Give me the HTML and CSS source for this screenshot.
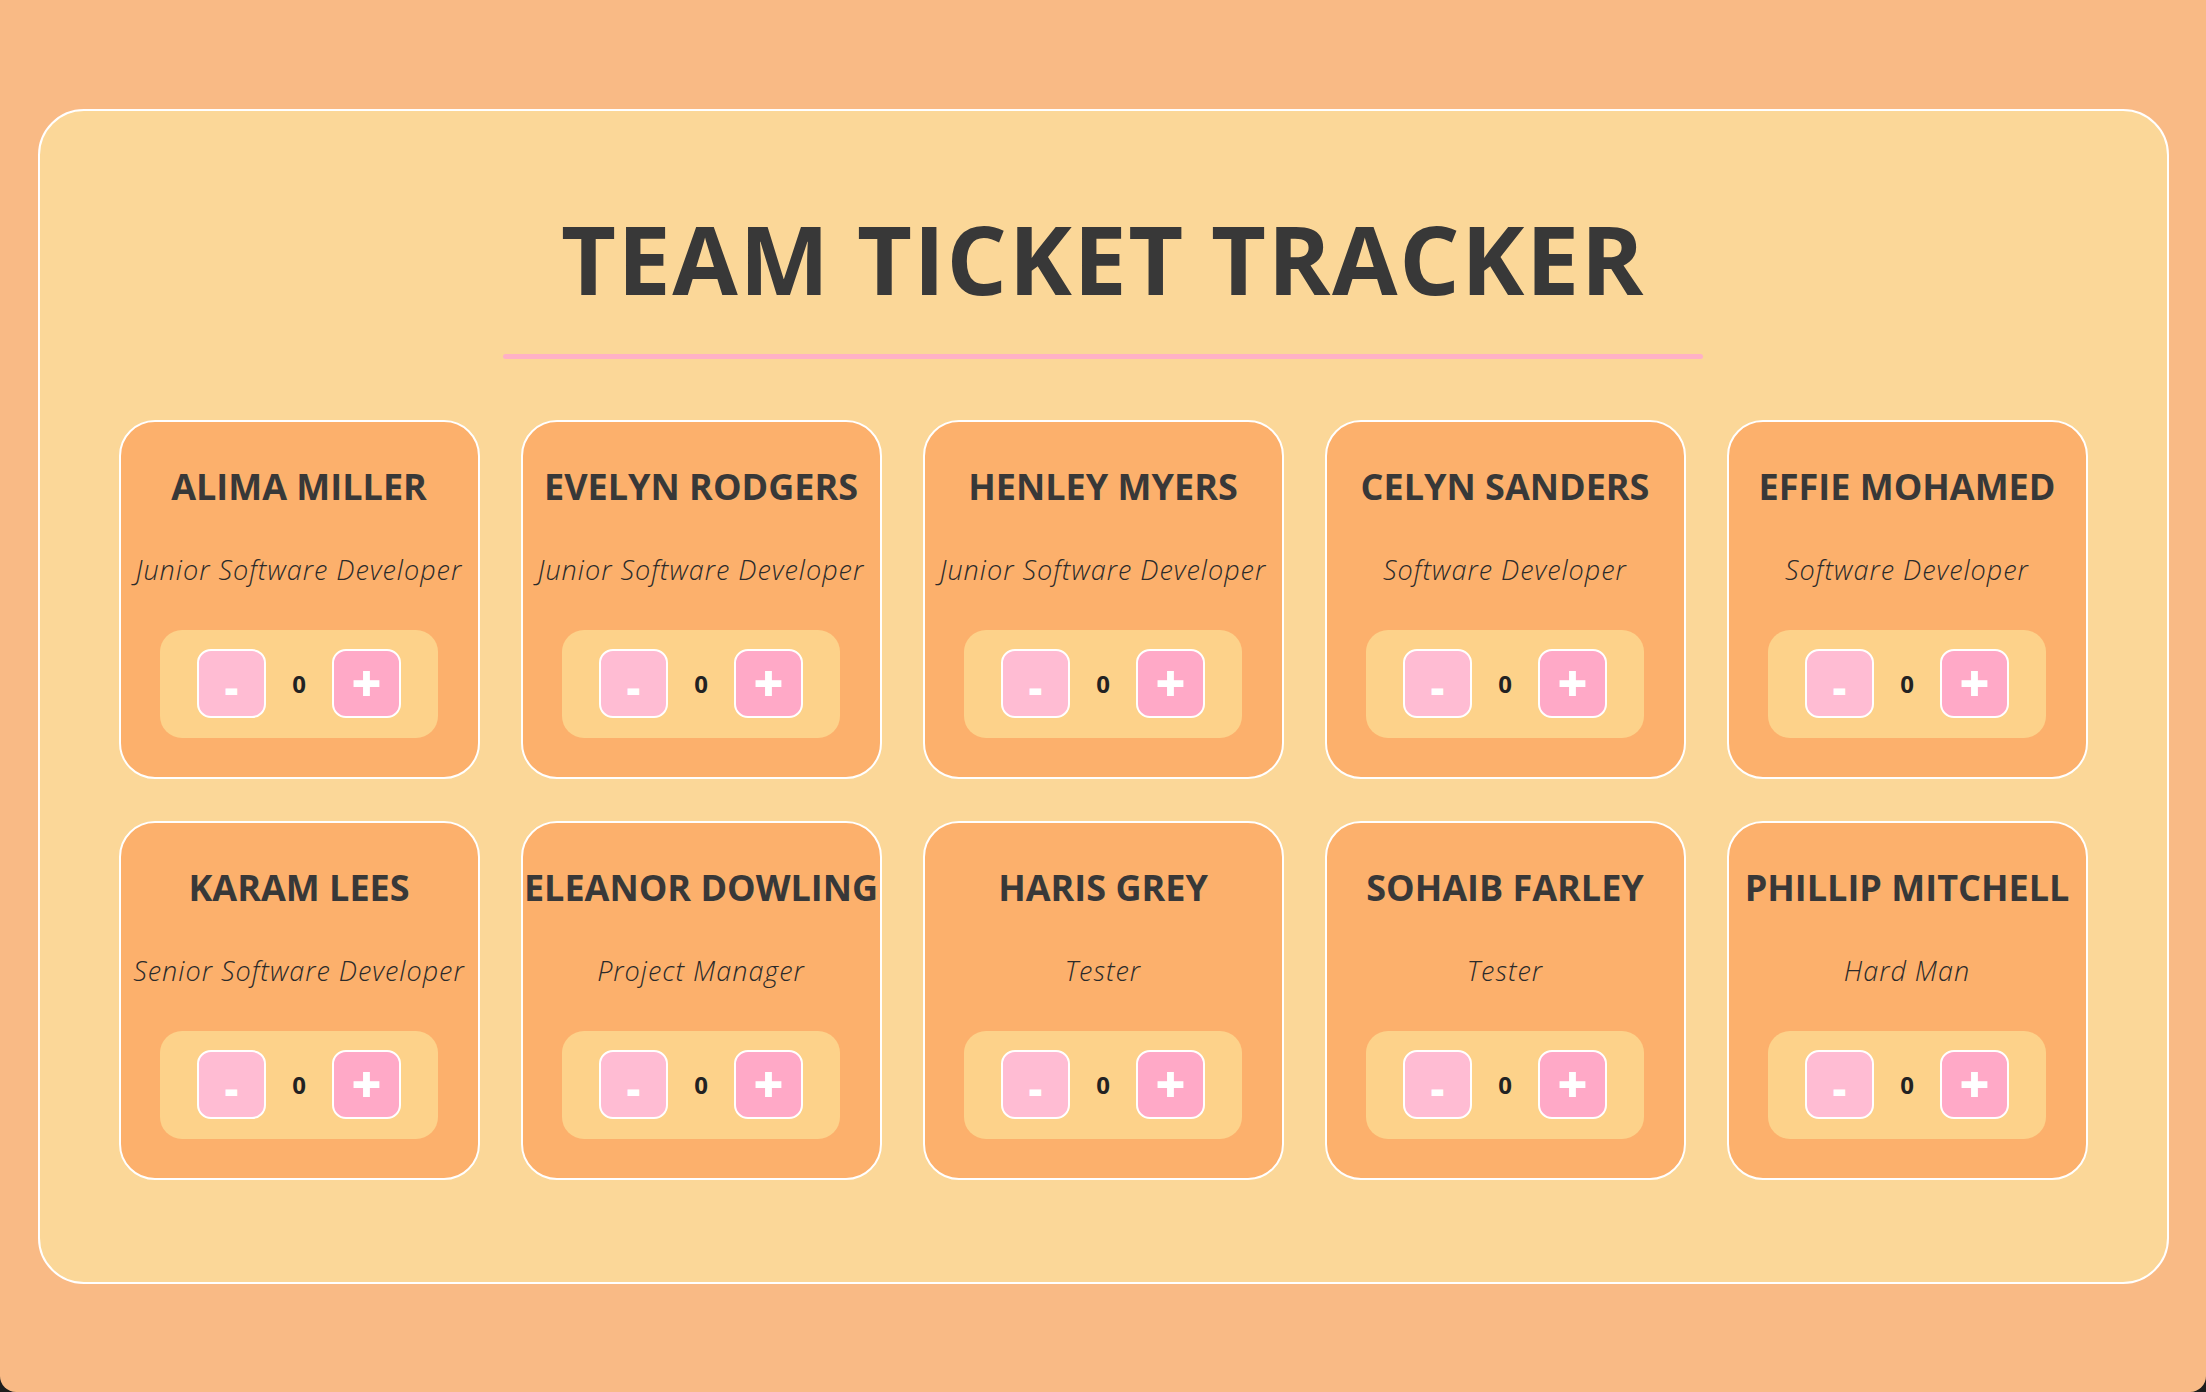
FILE: index.html
```html
<!DOCTYPE html>
<html lang="en">
<head>
<meta charset="utf-8">
<title>Team Ticket Tracker</title>
<link rel="stylesheet" href="styles.css">
</head>
<body>
<main class="tracker">
  <h1 class="title">TEAM TICKET TRACKER</h1>
  <div class="divider"></div>
  <section class="grid">
    <article class="card"><h2 class="name">ALIMA MILLER</h2><p class="role">Junior Software Developer</p><div class="counter"><button class="btn minus">-</button><span class="count">0</span><button class="btn plus">+</button></div></article>
    <article class="card"><h2 class="name">EVELYN RODGERS</h2><p class="role">Junior Software Developer</p><div class="counter"><button class="btn minus">-</button><span class="count">0</span><button class="btn plus">+</button></div></article>
    <article class="card"><h2 class="name">HENLEY MYERS</h2><p class="role">Junior Software Developer</p><div class="counter"><button class="btn minus">-</button><span class="count">0</span><button class="btn plus">+</button></div></article>
    <article class="card"><h2 class="name">CELYN SANDERS</h2><p class="role">Software Developer</p><div class="counter"><button class="btn minus">-</button><span class="count">0</span><button class="btn plus">+</button></div></article>
    <article class="card"><h2 class="name">EFFIE MOHAMED</h2><p class="role">Software Developer</p><div class="counter"><button class="btn minus">-</button><span class="count">0</span><button class="btn plus">+</button></div></article>
    <article class="card"><h2 class="name">KARAM LEES</h2><p class="role">Senior Software Developer</p><div class="counter"><button class="btn minus">-</button><span class="count">0</span><button class="btn plus">+</button></div></article>
    <article class="card"><h2 class="name">ELEANOR DOWLING</h2><p class="role">Project Manager</p><div class="counter"><button class="btn minus">-</button><span class="count">0</span><button class="btn plus">+</button></div></article>
    <article class="card"><h2 class="name">HARIS GREY</h2><p class="role">Tester</p><div class="counter"><button class="btn minus">-</button><span class="count">0</span><button class="btn plus">+</button></div></article>
    <article class="card"><h2 class="name">SOHAIB FARLEY</h2><p class="role">Tester</p><div class="counter"><button class="btn minus">-</button><span class="count">0</span><button class="btn plus">+</button></div></article>
    <article class="card"><h2 class="name">PHILLIP MITCHELL</h2><p class="role">Hard Man</p><div class="counter"><button class="btn minus">-</button><span class="count">0</span><button class="btn plus">+</button></div></article>
  </section>
</main>
</body>
</html>
```
FILE: styles.css
```css
html {
  background: #1e1e1e;
  height: 100%;
}

body {
  margin: 0;
  height: 100vh;
  background: #f9ba85;
  border-radius: 0 0 16px 16px;
  display: flex;
  align-items: center;
  justify-content: center;
  font-family: "Open Sans", "Noto Sans", sans-serif;
  color: #383838;
}

.tracker {
  box-sizing: border-box;
  width: 2131px;
  height: 1175px;
  background: #fbd798;
  border: 2px solid #ffffff;
  border-radius: 46px;
  padding-top: 100px;
  display: flex;
  flex-direction: column;
  align-items: center;
}

.title {
  margin: 0;
  font-size: 95px;
  line-height: 95px;
  font-weight: 700;
  letter-spacing: 1.6px;
  color: #383838;
}

.divider {
  width: 1200px;
  height: 5px;
  border-radius: 3px;
  background: #ffb1c6;
  margin-top: 48px;
}

.grid {
  margin-top: 61px;
  display: grid;
  grid-template-columns: repeat(5, 361px);
  column-gap: 41px;
  row-gap: 42px;
}

.card {
  box-sizing: border-box;
  height: 359px;
  background: #fcb06c;
  border: 2px solid #ffffff;
  border-radius: 36px;
  display: flex;
  flex-direction: column;
  align-items: center;
  padding-top: 47px;
}

.name {
  margin: 0;
  font-size: 36px;
  line-height: 36px;
  font-weight: 700;
  white-space: nowrap;
  color: #383838;
}

.role {
  margin: 52px 0 0;
  font-size: 27px;
  line-height: 26px;
  font-weight: 300;
  font-style: italic;
  letter-spacing: 1px;
  white-space: nowrap;
  color: #2a2a2a;
}

.counter {
  margin-top: 47px;
  box-sizing: border-box;
  width: 278px;
  height: 108px;
  background: #fdd28a;
  border-radius: 22px;
  display: flex;
  align-items: center;
  justify-content: center;
}

.btn {
  box-sizing: border-box;
  width: 69px;
  height: 69px;
  border: 2px solid #ffffff;
  border-radius: 14px;
  color: #ffffff;
  font-family: "Open Sans", "Noto Sans", sans-serif;
  font-weight: 800;
  padding: 0;
  display: flex;
  align-items: center;
  justify-content: center;
  cursor: pointer;
}

.minus {
  background: #ffbcd3;
  font-size: 42px;
  padding-top: 6px;
}

.plus {
  background: #ffa9c7;
  font-size: 52px;
  padding-bottom: 4px;
}

.count {
  width: 66px;
  text-align: center;
  font-size: 24px;
  font-weight: 700;
  color: #222222;
}
```
